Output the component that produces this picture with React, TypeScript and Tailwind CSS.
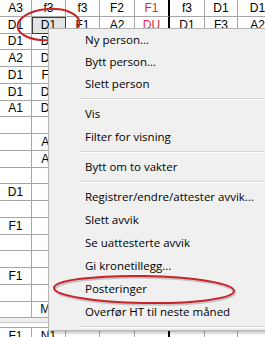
import React from "react";

const RED = new Set(["0-4", "1-4"]);

const ROWS: string[][] = [
  ["A3", "f3", "f3", "F2", "F1", "f3", "D1", "D1"],
  ["D1", "D1", "F1", "A2", "DU", "D1", "F3", "A2"],
  ["D1", "D1", "D1", "F1", "A2", "D1", "D1", "F2"],
  ["A2", "D1", "F2", "D1", "D1", "A2", "F1", "D1"],
  ["D1", "F1", "D1", "D1", "F3", "D1", "A2", "D1"],
  ["D1", "D1", "A2", "F1", "D1", "D1", "D1", "A1"],
  ["A1", "D1", "D1", "D1", "A2", "F1", "D1", "D1"],
  ["", "", "", "", "", "", "", ""],
  ["", "A1", "", "", "", "", "", ""],
  ["", "A1", "", "", "", "", "", ""],
  ["", "", "", "", "", "", "", ""],
  ["D1", "", "", "", "", "", "", ""],
  ["", "", "", "", "", "", "", ""],
  ["F1", "", "", "", "", "", "", ""],
  ["", "", "", "", "", "", "", ""],
  ["", "", "", "", "", "", "", ""],
  ["F1", "", "", "", "", "", "", ""],
  ["", "", "", "", "", "", "", ""],
  ["", "M1", "", "", "", "", "", ""],
];

type Item = { label: string; h?: string } | { sep: true };

const MENU: Item[] = [
  { label: "Ny person...", h: "h-[22px]" },
  { label: "Bytt person...", h: "h-[22px]" },
  { label: "Slett person", h: "h-[22px]" },
  { sep: true },
  { label: "Vis" },
  { label: "Filter for visning" },
  { sep: true },
  { label: "Bytt om to vakter" },
  { sep: true },
  { label: "Registrer/endre/attester avvik..." },
  { label: "Slett avvik" },
  { label: "Se uattesterte avvik" },
  { label: "Gi kronetillegg..." },
  { label: "Posteringer" },
  { label: "Overfør HT til neste måned" },
  { sep: true },
];

function Row({ cells, r }: { cells: string[]; r: number }) {
  return (
    <div className="grid h-[16.75px] grid-cols-[32px_34px_34px_35px_35px_35px_33px_40px]">
      {cells.map((c, i) => {
        const selected = r === 1 && i === 1;
        return (
          <div
            key={i}
            className={
              "flex items-center justify-center border-b border-r border-[#a6a6a6] text-[12px] leading-none " +
              (i === 4 ? "border-r-2 border-r-black " : "") +
              (RED.has(`${r}-${i}`) ? "text-[#ee1f3c] " : "text-black ") +
              (selected ? "bg-[#e3e3e3] outline outline-1 -outline-offset-1 outline-[#3c3c3c]" : "")
            }
          >
            {c}
          </div>
        );
      })}
    </div>
  );
}

export default function App() {
  return (
    <div
      className="relative h-[337px] w-[265px] overflow-hidden bg-white"
      style={{ fontFamily: '"Liberation Sans", Arial, sans-serif' }}
    >
      <div className="flex flex-col">
        {ROWS.map((cells, r) => (
          <Row key={r} cells={cells} r={r} />
        ))}
        <div className="h-[5px] border-b border-[#c9c9c9] bg-[#f0f0f0]" />
        <div className="h-[5px] border-b border-[#a6a6a6] bg-white" />
        <Row cells={["F1", "N1", "", "", "", "", "", ""]} r={99} />
      </div>

      <svg className="pointer-events-none absolute left-0 top-0" width="265" height="337">
        <ellipse cx="48.5" cy="24.5" rx="31" ry="15.5" fill="none" stroke="#c9242c" strokeWidth="2" transform="rotate(-4 48.5 24.5)" />
      </svg>

      <div
        className="absolute left-[48px] top-[28px] w-[240px] border border-[#b4b4b4] bg-[#f0f0f0] shadow-[2px_2px_3px_rgba(0,0,0,0.25)]"
        style={{ fontFamily: '"Open Sans", "Noto Sans", sans-serif' }}
      >
        {MENU.map((it, i) =>
          "sep" in it ? (
            <div key={i} className="flex h-[7px] items-center pl-[31px]">
              <div className="h-[2px] w-full border-t border-[#d7d7d7] bg-white" />
            </div>
          ) : (
            <div
              key={i}
              className={"flex items-center pl-[36px] text-[11.5px] text-black " + (it.h ?? "h-[23px]")}
            >
              {it.label}
            </div>
          )
        )}
      </div>

      <svg className="pointer-events-none absolute left-0 top-0" width="265" height="337">
        <ellipse cx="145" cy="291" rx="90" ry="13.5" fill="none" stroke="#000" strokeOpacity="0.18" strokeWidth="2.5" transform="rotate(1 145 291)" />
        <ellipse cx="144" cy="289.5" rx="90" ry="13.5" fill="none" stroke="#c9242c" strokeWidth="2" transform="rotate(1 144 289.5)" />
      </svg>
    </div>
  );
}
